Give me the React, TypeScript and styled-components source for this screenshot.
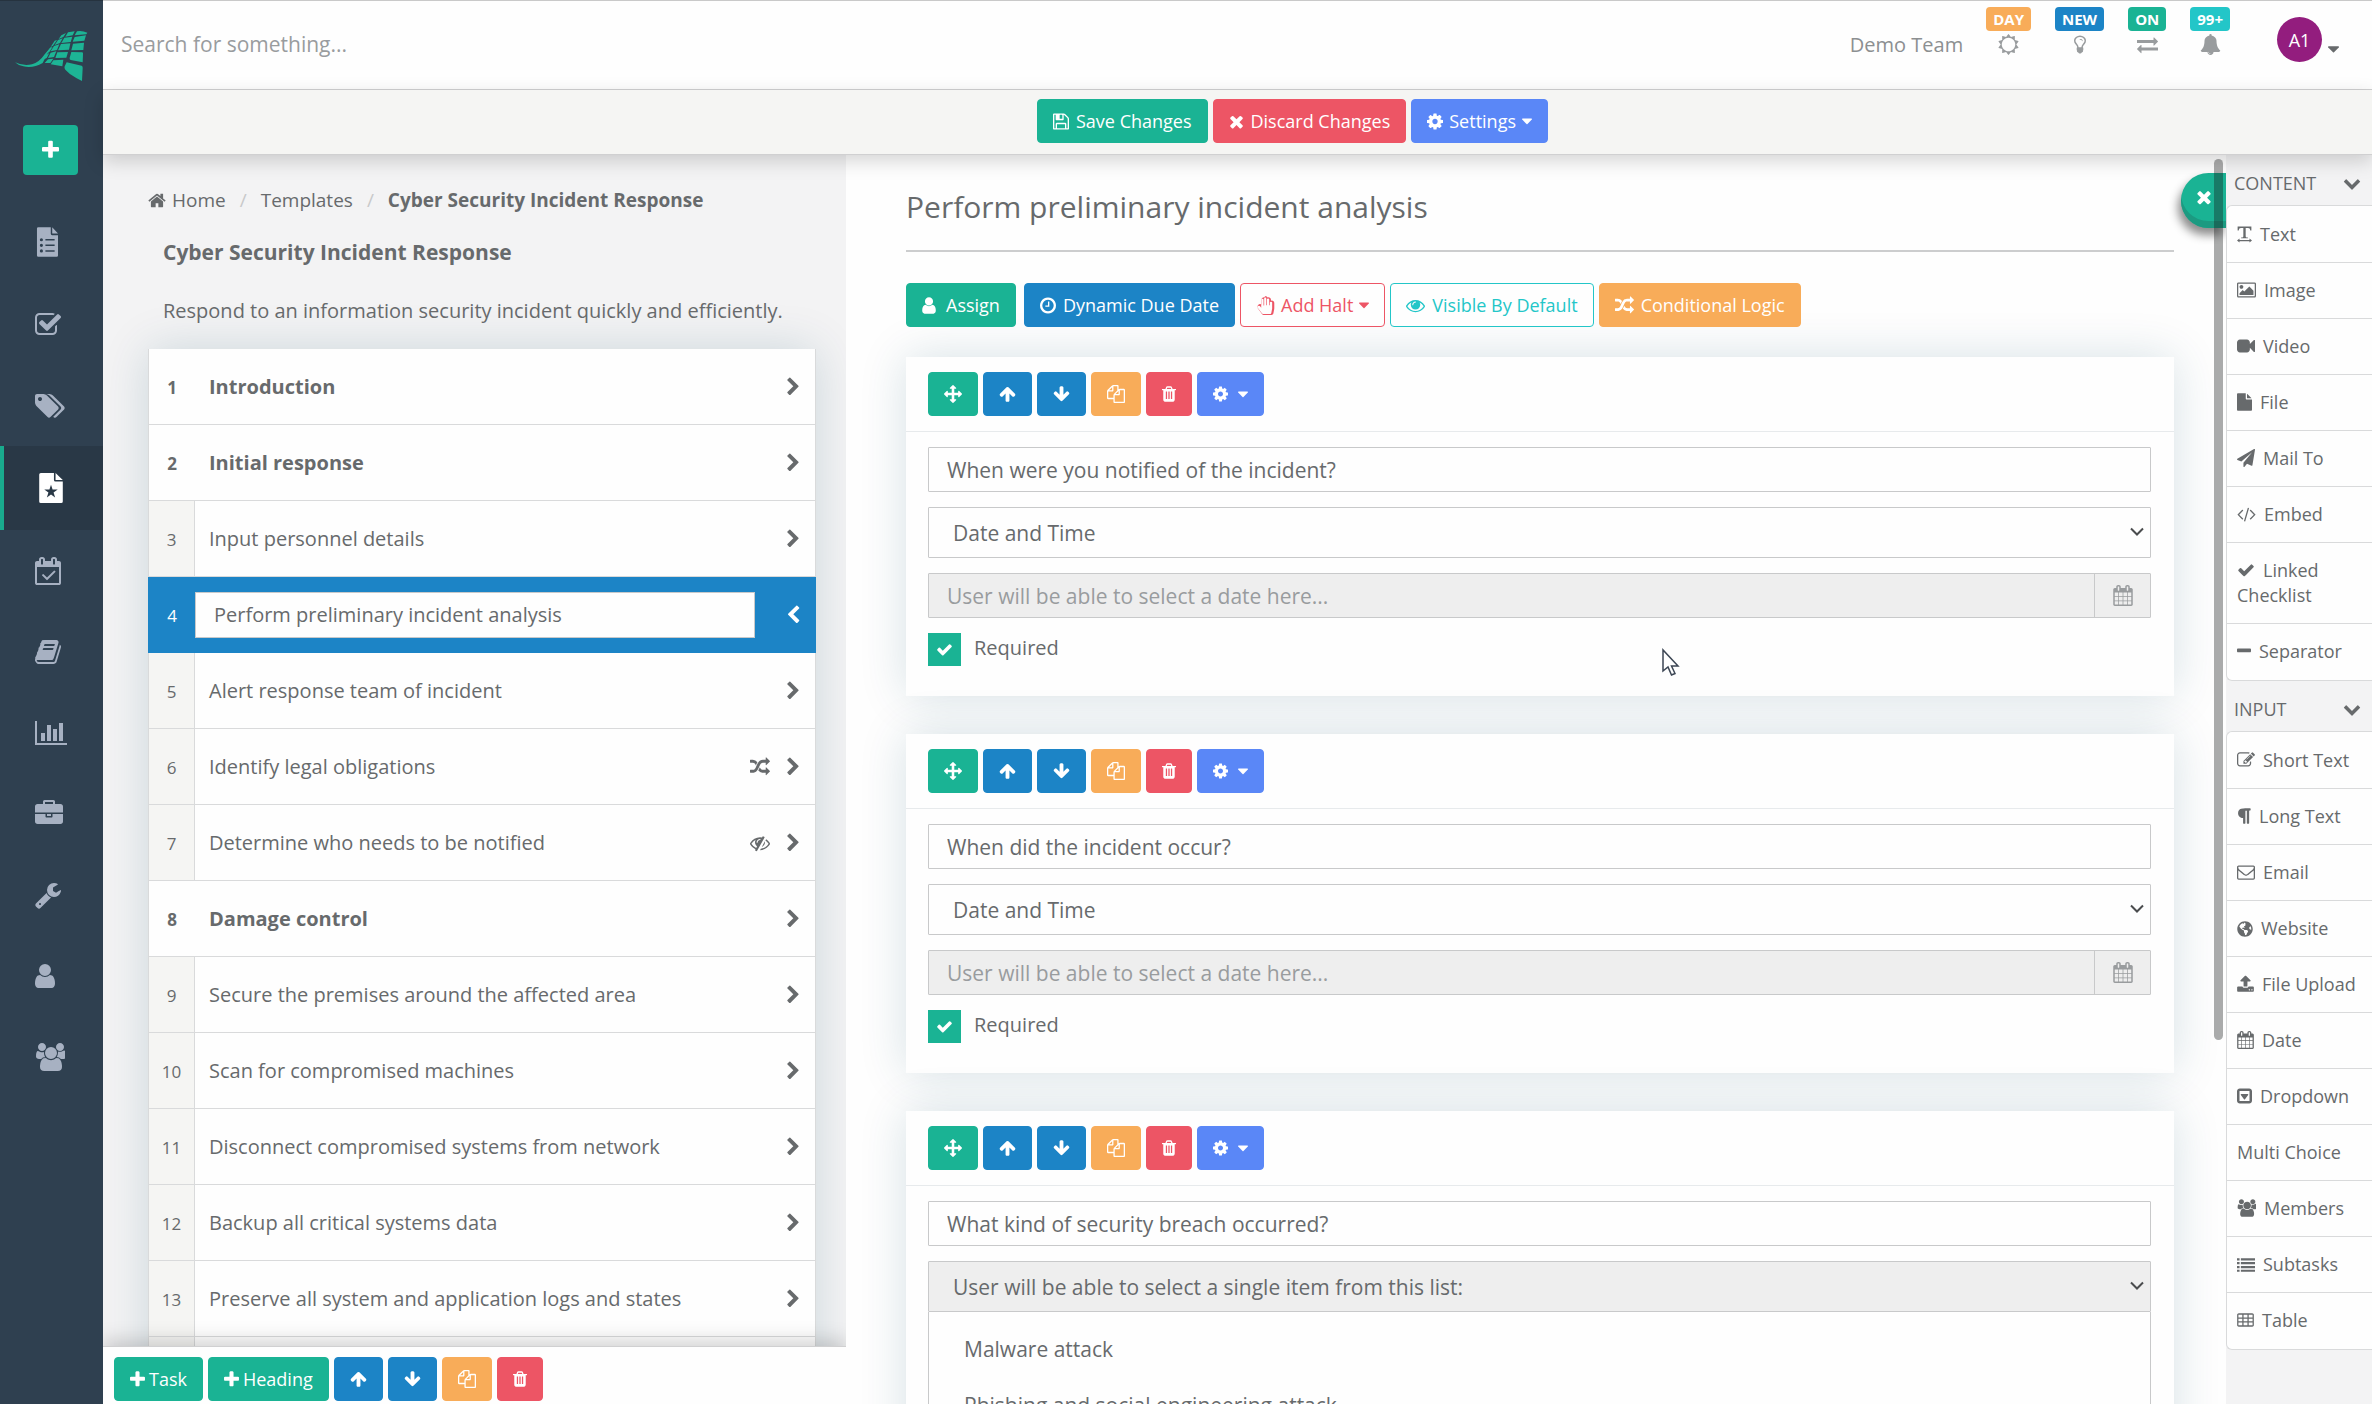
import React from "react";
import styled, { createGlobalStyle, css } from "styled-components";
import { FaGlobeAmericas } from "react-icons/fa";

const color = {
  text: "#676a6c",
  green: "#1ab394",
  blue: "#1c84c6",
  indigo: "#5a87f7",
  orange: "#f8ac59",
  red: "#ed5565",
  teal: "#23c6c8",
  line: "#d9dadb",
  field: "#c8c9ca",
  panel: "#f3f3f4",
  strip: "#f5f5f3",
  nav: "#2f4050",
  navIcon: "#a7b1c2",
};

const GlobalStyle = createGlobalStyle`
  *, *::before, *::after { box-sizing: border-box; }
  body {
    margin: 0;
    overflow: hidden;
    background: #fefefe;
    color: ${color.text};
    font: 20px/28px "Open Sans", "Noto Sans", sans-serif;
  }
  button, input, select { font: inherit; color: inherit; }
  button { cursor: pointer; }
  a { color: inherit; text-decoration: none; }
  ul { list-style: none; margin: 0; padding: 0; }
`;

/* ---------- icons: [left edge, advance width, path] on a 1792 unit em ---------- */

type Glyph = [number, number, string];

const glyphs = {
  plus: [192, 1408, "M1600 736v192q0 40-28 68t-68 28h-416v416q0 40-28 68t-68 28h-192q-40 0-68-28t-28-68v-416h-416q-40 0-68-28t-28-68v-192q0-40 28-68t68-28h416v-416q0-40 28-68t68-28h192q40 0 68 28t28 68v416h416q40 0 68 28t28 68z"],
  minus: [192, 1408, "M1600 736v192q0 40-28 68t-68 28h-1216q-40 0-68-28t-28-68v-192q0-40 28-68t68-28h1216q40 0 68 28t28 68z"],
  times: [192, 1408, "M1490 1322q0 40-28 68l-136 136q-28 28-68 28t-68-28l-294-294-294 294q-28 28-68 28t-68-28l-136-136q-28-28-28-68t28-68l294-294-294-294q-28-28-28-68t28-68l136-136q28-28 68-28t68 28l294 294 294-294q28-28 68-28t68 28l136 136q28 28 28 68t-28 68l-294 294 294 294q28 28 28 68z"],
  cog: [128, 1536, "M1152 896q0-106-75-181t-181-75-181 75-75 181 75 181 181 75 181-75 75-181zm512-109v222q0 12-8 23t-20 13l-185 28q-19 54-39 91 35 50 107 138 10 12 10 25t-9 23q-27 37-99 108t-94 71q-12 0-26-9l-138-108q-44 23-91 38-16 136-29 186-7 28-36 28h-222q-14 0-24.5-8.5t-11.5-21.5l-28-184q-49-16-90-37l-141 107q-10 9-25 9-14 0-25-11-126-114-165-168-7-10-7-23 0-12 8-23 15-21 51-66.500t54-70.500q-27-50-41-99l-183-27q-13-2-21-12.500t-8-23.500v-222q0-12 8-23t19-13l186-28q14-46 39-92-40-57-107-138-10-12-10-24 0-10 9-23 26-36 98.500-107.500t94.500-71.500q13 0 26 10l138 107q44-23 91-38 16-136 29-186 7-28 36-28h222q14 0 24.500 8.500t11.500 21.500l28 184q49 16 90 37l142-107q9-9 24-9 13 0 25 10 129 119 165 170 7 8 7 22 0 12-8 23-15 21-51 66.500t-54 70.500q26 50 41 98l183 28q13 2 21 12.500t8 23.500z"],
  save: [128, 1536, "M512 1536h768v-384h-768v384zm896 0h128v-896q0-14-10-38.500t-20-34.500l-281-281q-10-10-34-20t-39-10v416q0 40-28 68t-68 28h-576q-40 0-68-28t-28-68v-416h-128v1280h128v-416q0-40 28-68t68-28h832q40 0 68 28t28 68v416zm-384-928v-320q0-13-9.500-22.500t-22.500-9.500h-192q-13 0-22.500 9.500t-9.500 22.500v320q0 13 9.500 22.500t22.500 9.500h192q13 0 22.500-9.500t9.500-22.500zm640 32v928q0 40-28 68t-68 28h-1344q-40 0-68-28t-28-68v-1344q0-40 28-68t68-28h928q40 0 88 20t76 48l280 280q28 28 48 76t20 88z"],
  caret: [384, 1024, "M1408 704q0 26-19 45l-448 448q-19 19-45 19t-45-19l-448-448q-19-19-19-45t19-45 45-19h896q26 0 45 19t19 45z"],
  up: [64, 1664, "M1675 971q0 51-37 90l-75 75q-38 38-91 38-54 0-90-38l-294-293v704q0 52-37.500 84.500t-90.500 32.500h-128q-53 0-90.500-32.500t-37.500-84.500v-704l-294 293q-36 38-90 38t-90-38l-75-75q-38-38-38-90 0-53 38-91l651-651q35-37 90-37 54 0 91 37l651 651q37 39 37 91z"],
  down: [64, 1664, "M1675 832q0 53-37 90l-651 652q-39 37-91 37-53 0-90-37l-651-652q-38-36-38-90 0-53 38-91l74-75q39-37 91-37 53 0 90 37l294 294v-704q0-52 38-90t90-38h128q52 0 90 38t38 90v704l294-294q37-37 90-37 52 0 91 37l75 75q37 39 37 91z"],
  move: [0, 1792, "M1792 896q0 26-19 45l-256 256q-19 19-45 19t-45-19-19-45v-128h-384v384h128q26 0 45 19t19 45-19 45l-256 256q-19 19-45 19t-45-19l-256-256q-19-19-19-45t19-45 45-19h128v-384h-384v128q0 26-19 45t-45 19-45-19l-256-256q-19-19-19-45t19-45l256-256q19-19 45-19t45 19 19 45v128h384v-384h-128q-26 0-45-19t-19-45 19-45l256-256q19-19 45-19t45 19l256 256q19 19 19 45t-19 45-45 19h-128v384h384v-128q0-26 19-45t45-19 45 19l256 256q19 19 19 45z"],
  copy: [0, 1792, "M1696 384q40 0 68 28t28 68v1216q0 40-28 68t-68 28h-960q-40 0-68-28t-28-68v-288h-544q-40 0-68-28t-28-68v-672q0-40 20-88t48-76l408-408q28-28 76-48t88-20h416q40 0 68 28t28 68v328q68-40 128-40h416zm-544 213l-299 299h299v-299zm-640-384l-299 299h299v-299zm196 647l316-316v-416h-384v416q0 40-28 68t-68 28h-416v640h512v-256q0-40 20-88t48-76zm956 804v-1152h-384v416q0 40-28 68t-68 28h-416v640h896z"],
  trash: [192, 1408, "M704 1376v-704q0-14-9-23t-23-9h-64q-14 0-23 9t-9 23v704q0 14 9 23t23 9h64q14 0 23-9t9-23zm256 0v-704q0-14-9-23t-23-9h-64q-14 0-23 9t-9 23v704q0 14 9 23t23 9h64q14 0 23-9t9-23zm256 0v-704q0-14-9-23t-23-9h-64q-14 0-23 9t-9 23v704q0 14 9 23t23 9h64q14 0 23-9t9-23zm-544-992h448l-48-117q-7-9-17-11h-317q-10 2-17 11zm928 32v64q0 14-9 23t-23 9h-96v948q0 83-47 143.500t-113 60.500h-832q-66 0-113-58.500t-47-141.500v-952h-96q-14 0-23-9t-9-23v-64q0-14 9-23t23-9h309l70-167q15-37 54-63t79-26h320q40 0 79 26t54 63l70 167h309q14 0 23 9t9 23z"],
  random: [0, 1792, "M666 481q-60 92-137 273-22-45-37-72.500t-40.500-63.500-51-56.500-63-35-81.500-14.500h-224q-14 0-23-9t-9-23v-192q0-14 9-23t23-9h224q250 0 410 225zm1126 799q0 14-9 23l-320 320q-9 9-23 9-13 0-22.500-9.500t-9.500-22.500v-192q-32 0-85 .5t-81 1-73-1-71-5-64-10.500-63-18.500-58-28.500-59-40-55-53.500-56-69.500q59-93 136-273 22 45 37 72.500t40.500 63.500 51 56.500 63 35 81.500 14.500h256v-192q0-14 9-23t23-9q12 0 24 10l319 319q9 9 9 23zm0-896q0 14-9 23l-320 320q-9 9-23 9-13 0-22.500-9.500t-9.500-22.500v-192h-256q-48 0-87 15t-69 45-51 61.500-45 77.500q-32 62-78 171-29 66-49.500 111t-54 105-64 100-74 83-90 68.500-106.500 42-128 16.500h-224q-14 0-23-9t-9-23v-192q0-14 9-23t23-9h224q48 0 87-15t69-45 51-61.500 45-77.500q32-62 78-171 29-66 49.500-111t54-105 64-100 74-83 90-68.500 106.500-42 128-16.500h256v-192q0-14 9-23t23-9q12 0 24 10l319 319q9 9 9 23z"],
  right: [320, 1280, "M1363 877l-742 742q-19 19-45 19t-45-19l-166-166q-19-19-19-45t19-45l531-531-531-531q-19-19-19-45t19-45l166-166q19-19 45-19t45 19l742 742q19 19 19 45t-19 45z"],
  left: [320, 1280, "M1427 301l-531 531 531 531q19 19 19 45t-19 45l-166 166q-19 19-45 19t-45-19l-742-742q-19-19-19-45t19-45l742-742q19-19 45-19t45 19l166 166q19 19 19 45t-19 45z"],
  chevronDown: [0, 1792, "M1683 808l-742 741q-19 19-45 19t-45-19l-742-741q-19-19-19-45.500t19-45.500l166-165q19-19 45-19t45 19l531 531 531-531q19-19 45-19t45 19l166 165q19 19 19 45.500t-19 45.500z"],
  home: [64, 1664, "M1472 992v480q0 26-19 45t-45 19h-384v-384h-256v384h-384q-26 0-45-19t-19-45v-480q0-1 .5-3t.5-3l575-474 575 474q1 2 1 6zm223-69l-62 74q-8 9-21 11h-3q-13 0-21-7l-692-577-692 577q-12 8-24 7-13-2-21-11l-62-74q-8-10-7-23.500t11-21.500l719-599q32-26 76-26t76 26l244 204v-195q0-14 9-23t23-9h192q14 0 23 9t9 23v408l219 182q10 8 11 21.500t-7 23.500z"],
  checkSquare: [64, 1664, "M1472 930v318q0 119-84.500 203.500t-203.500 84.500h-832q-119 0-203.500-84.500t-84.500-203.500v-832q0-119 84.500-203.500t203.500-84.500h832q63 0 117 25 15 7 18 23 3 17-9 29l-49 49q-10 10-23 10-3 0-9-2-23-6-45-6h-832q-66 0-113 47t-47 113v832q0 66 47 113t113 47h832q66 0 113-47t47-113v-254q0-13 9-22l64-64q10-10 23-10 6 0 12 3 20 8 20 29zm231-489l-814 814q-24 24-57 24t-57-24l-430-430q-24-24-24-57t24-57l110-110q24-24 57-24t57 24l263 263 647-647q24-24 57-24t57 24l110 110q24 24 24 57t-24 57z"],
  tags: [0, 1920, "M448 448q0-53-37.500-90.500t-90.500-37.500-90.500 37.500-37.500 90.500 37.500 90.500 90.500 37.500 90.500-37.500 37.500-90.500zm1067 576q0 53-37 90l-491 492q-39 37-91 37-53 0-90-37l-715-716q-38-37-64.500-101t-26.500-117v-416q0-52 38-90t90-38h416q53 0 117 26.500t102 64.500l715 714q37 39 37 91zm384 0q0 53-37 90l-491 492q-39 37-91 37-36 0-59-14t-53-45l470-470q37-37 37-90 0-52-37-91l-715-714q-38-38-102-64.500t-117-26.500h224q53 0 117 26.500t102 64.500l715 714q37 39 37 91z"],
  calendarCheck: [0, 1664, "M1303 964l-512 512q-10 9-23 9t-23-9l-288-288q-9-10-9-23t9-22l46-46q9-9 22-9t23 9l220 220 444-444q10-9 23-9t22 9l46 46q9 9 9 22t-9 23zm-1175 700h1408v-1024h-1408v1024zm384-1216v-288q0-14-9-23t-23-9h-64q-14 0-23 9t-9 23v288q0 14 9 23t23 9h64q14 0 23-9t9-23zm768 0v-288q0-14-9-23t-23-9h-64q-14 0-23 9t-9 23v288q0 14 9 23t23 9h64q14 0 23-9t9-23zm384-64v1280q0 52-38 90t-90 38h-1408q-52 0-90-38t-38-90v-1280q0-52 38-90t90-38h128v-96q0-66 47-113t113-47h64q66 0 113 47t47 113v96h384v-96q0-66 47-113t113-47h64q66 0 113 47t47 113v96h128q52 0 90 38t38 90z"],
  calendar: [64, 1664, "M192 1664h288v-288h-288v288zm352 0h320v-288h-320v288zm-352-352h288v-320h-288v320zm352 0h320v-320h-320v320zm-352-384h288v-288h-288v288zm736 736h320v-288h-320v288zm-384-736h320v-288h-320v288zm768 736h288v-288h-288v288zm-384-352h320v-320h-320v320zm-352-864v-288q0-13-9.500-22.500t-22.500-9.500h-64q-13 0-22.500 9.500t-9.500 22.500v288q0 13 9.500 22.500t22.500 9.500h64q13 0 22.500-9.500t9.500-22.500zm736 864h288v-320h-288v320zm-384-384h320v-288h-320v288zm384 0h288v-288h-288v288zm32-480v-288q0-13-9.500-22.500t-22.500-9.500h-64q-13 0-22.500 9.500t-9.500 22.500v288q0 13 9.500 22.500t22.500 9.500h64q13 0 22.500-9.500t9.500-22.500zm384-64v1280q0 52-38 90t-90 38h-1408q-52 0-90-38t-38-90v-1280q0-52 38-90t90-38h128v-96q0-66 47-113t113-47h64q66 0 113 47t47 113v96h384v-96q0-66 47-113t113-47h64q66 0 113 47t47 113v96h128q52 0 90 38t38 90z"],
  book: [64, 1664, "M1703 478q40 57 18 129l-275 906q-19 64-76.500 107.500t-122.500 43.500h-923q-77 0-148.500-53.500t-99.500-131.500q-24-67-2-127 0-4 3-27t4-37q1-8-3-21.500t-3-19.500q2-11 8-21t16.500-23.500 16.500-23.500q23-38 45-91.500t30-91.500q3-10 .5-30t-.5-28q3-11 17-28t17-23q21-36 42-92t25-90q1-9-2.500-32t.5-28q4-13 22-30.500t22-22.500q19-26 42.500-84.500t27.500-96.500q1-8-3-25.500t-2-26.500q2-8 9-18t18-23 17-21q8-12 16.500-30.500t15-35 16-36 19.500-32 26.500-23.500 36-11.500 47.500 5.500l-1 3q38-9 51-9h761q74 0 114 56t18 130l-274 906q-36 119-71.500 153.500t-128.500 34.500h-869q-27 0-38 15-11 16-1 43 24 70 144 70h923q29 0 56-15.500t35-41.500l300-987q7-22 5-57 38 15 59 43zm-1064 2q-4 13 2 22.500t20 9.500h608q13 0 25.500-9.500t16.500-22.500l21-64q4-13-2-22.500t-20-9.500h-608q-13 0-25.500 9.500t-16.500 22.500zm-83 256q-4 13 2 22.500t20 9.500h608q13 0 25.500-9.500t16.500-22.500l21-64q4-13-2-22.500t-20-9.500h-608q-13 0-25.500 9.500t-16.500 22.500z"],
  chart: [0, 2048, "M640 896v512h-256v-512h256zm384-512v1024h-256v-1024h256zm1024 1152v128h-2048v-1536h128v1408h1920zm-640-896v768h-256v-768h256zm384-384v1152h-256v-1152h256z"],
  briefcase: [0, 1792, "M640 256h512v-128h-512v128zm1152 640v480q0 66-47 113t-113 47h-1472q-66 0-113-47t-47-113v-480h672v160q0 26 19 45t45 19h320q26 0 45-19t19-45v-160h672zm-768 0v128h-256v-128h256zm768-480v384h-1792v-384q0-66 47-113t113-47h352v-160q0-40 28-68t68-28h576q40 0 68 28t28 68v160h352q66 0 113 47t47 113z"],
  wrench: [64, 1664, "M448 1472q0-26-19-45t-45-19-45 19-19 45 19 45 45 19 45-19 19-45zm644-420l-682 682q-37 37-90 37-52 0-91-37l-106-108q-38-36-38-90 0-53 38-91l681-681q39 98 114.500 173.500t173.500 114.500zm634-435q0 39-23 106-47 134-164.500 217.500t-258.500 83.500q-185 0-316.500-131.500t-131.500-316.500 131.500-316.500 316.500-131.500q58 0 121.500 16.500t107.500 46.500q16 11 16 28t-16 28l-293 169v224l193 107q5-3 79-48.500t135.500-81 70.500-35.500q15 0 23.500 10t8.500 25z"],
  user: [256, 1280, "M1536 1399q0 109-62.500 187t-150.500 78h-854q-88 0-150.500-78t-62.500-187q0-85 8.500-160.500t31.500-152 58.500-131 94-89 134.500-34.500q131 128 313 128t313-128q76 0 134.500 34.500t94 89 58.500 131 31.500 152 8.500 160.500zm-256-887q0 159-112.500 271.500t-271.500 112.500-271.500-112.500-112.500-271.500 112.500-271.500 271.500-112.500 271.500 112.500 112.500 271.500z"],
  users: [-64, 1920, "M593 896q-162 5-265 128h-134q-82 0-138-40.500t-56-118.500q0-353 124-353 6 0 43.500 21t97.500 42.500 119 21.500q67 0 133-23-5 37-5 66 0 159 81 292zm1071 637q0 120-73 189.500t-194 69.500h-874q-121 0-194-69.500t-73-189.500q0-53 3.500-103.500t14-109 26.500-108.500 43-97.500 62-81 85.500-53.500 111.500-20q10 0 43 21.500t73 48 107 48 135 21.500 135-21.500 107-48 73-48 43-21.500q61 0 111.500 20t85.500 53.500 62 81 43 97.500 26.500 108.500 14 109 3.500 103.500zm-1024-1277q0 106-75 181t-181 75-181-75-75-181 75-181 181-75 181 75 75 181zm704 384q0 159-112.500 271.500t-271.500 112.500-271.500-112.500-112.500-271.500 112.500-271.500 271.500-112.500 271.500 112.500 112.500 271.500zm576 225q0 78-56 118.500t-138 40.500h-134q-103-123-265-128 81-133 81-292 0-29-5-66 66 23 133 23 59 0 119-21.500t97.500-42.500 43.500-21q124 0 124 353zm-128-609q0 106-75 181t-181 75-181-75-75-181 75-181 181-75 181 75 75 181z"],
  bulb: [384, 1024, "M1120 576q0 13-9.500 22.500t-22.500 9.500-22.500-9.500-9.500-22.500q0-46-54-71t-106-25q-13 0-22.500-9.500t-9.500-22.500 9.500-22.500 22.500-9.500q50 0 99.500 16t87 54 37.500 90zm160 0q0-72-34.500-134t-90-101.500-123-62-136.500-22.500-136.500 22.500-123 62-90 101.500-34.500 134q0 101 68 180 10 11 30.500 33t30.500 33q128 153 141 298h228q13-145 141-298 10-11 30.500-33t30.500-33q68-79 68-180zm128 0q0 155-103 268-45 49-74.500 87t-59.500 95.500-34 107.500q47 28 47 82 0 37-25 64 25 27 25 64 0 52-45 81 13 23 13 47 0 46-31.500 71t-77.500 25q-20 44-60 70t-87 26-87-26-60-70q-46 0-77.500-25t-31.500-71q0-24 13-47-45-29-45-81 0-37 25-64-25-27-25-64 0-54 47-82-4-50-34-107.500t-59.500-95.500-74.500-87q-103-113-103-268 0-99 44.500-184.500t117-142 164-89 186.500-32.500 186.500 32.500 164 89 117 142 44.500 184.500z"],
  exchange: [0, 1792, "M1792 1184v192q0 13-9.500 22.500t-22.500 9.500h-1376v192q0 13-9.500 22.500t-22.500 9.500q-12 0-24-10l-319-320q-9-9-9-22 0-14 9-23l320-320q9-9 23-9 13 0 22.500 9.500t9.500 22.500v192h1376q13 0 22.500 9.500t9.500 22.500zm0-544q0 14-9 23l-320 320q-9 9-23 9-13 0-22.500-9.500t-9.500-22.500v-192h-1376q-13 0-22.500-9.500t-9.500-22.500v-192q0-13 9.500-22.500t22.500-9.500h1376v-192q0-14 9-23t23-9q12 0 24 10l319 319q9 9 9 23z"],
  bell: [0, 1792, "M912 1696q0-16-16-16-59 0-101.500-42.500t-42.500-101.500q0-16-16-16t-16 16q0 73 51.500 124.500t124.500 51.500q16 0 16-16zm816-288q0 52-38 90t-90 38h-448q0 106-75 181t-181 75-181-75-75-181h-448q-52 0-90-38t-38-90q50-42 91-88t85-119.500 74.500-158.500 50-206 19.500-260q0-152 117-282.500t307-158.500q-8-19-8-39 0-40 28-68t68-28 68 28 28 68q0 20-8 39 190 28 307 158.500t117 282.500q0 139 19.500 260t50 206 74.500 158.500 85 119.500 91 88z"],
  sun: [0, 1792, "M1472 896q0-117-45.500-223.500t-123-184-184-123-223.500-45.500-223.500 45.500-184 123-123 184-45.500 223.500 45.500 223.500 123 184 184 123 223.500 45.500 223.500-45.500 184-123 123-184 45.500-223.500zm276 277q-4 15-20 20l-292 96v306q0 16-13 26-15 10-29 4l-292-94-180 248q-10 13-26 13t-26-13l-180-248-292 94q-14 6-29-4-13-10-13-26v-306l-292-96q-16-5-20-20-5-17 4-29l180-248-180-248q-9-13-4-29 4-15 20-20l292-96v-306q0-16 13-26 15-10 29-4l292 94 180-248q9-12 26-12t26 12l180 248 292-94q14-6 29 4 13 10 13 26v306l292 96q16 5 20 20 5 16-4 29l-180 248 180 248q9 12 4 29z"],
  clock: [128, 1536, "M1024 544v448q0 14-9 23t-23 9h-320q-14 0-23-9t-9-23v-64q0-14 9-23t23-9h224v-352q0-14 9-23t23-9h64q14 0 23 9t9 23zm416 352q0-148-73-273t-198-198-273-73-273 73-198 198-73 273 73 273 198 198 273 73 273-73 198-198 73-273zm224 0q0 209-103 385.500t-279.500 279.500-385.500 103-385.500-103-279.500-279.500-103-385.500 103-385.500 279.500-279.500 385.500-103 385.500 103 279.500 279.500 103 385.500z"],
  eye: [0, 1792, "M1664 960q-152-236-381-353 61 104 61 225 0 185-131.500 316.500t-316.500 131.500-316.500-131.500-131.500-316.500q0-121 61-225-229 117-381 353 133 205 333.500 326.500t434.500 121.500 434.500-121.500 333.500-326.500zm-720-384q0-20-14-34t-34-14q-125 0-214.500 89.500t-89.500 214.500q0 20 14 34t34 14 34-14 14-34q0-86 61-147t147-61q20 0 34-14t14-34zm848 384q0 34-20 69-140 230-376.500 368.500t-499.500 138.500-499.500-139-376.500-368q-20-35-20-69t20-69q140-229 376.500-368t499.500-139 499.500 139 376.500 368q20 35 20 69z"],
  eyeSlash: [0, 1792, "M555 1335l78-141q-87-63-136-159t-49-203q0-121 61-225-229 117-381 353 167 258 427 375zm389-759q0-20-14-34t-34-14q-125 0-214.500 89.500t-89.500 214.500q0 20 14 34t34 14 34-14 14-34q0-86 61-147t147-61q20 0 34-14t14-34zm363-191q0 7-1 9-106 189-316 567t-315 566l-49 89q-10 16-28 16-12 0-134-70-16-10-16-28 0-12 44-87-143-65-263.500-173t-208.500-245q-20-31-20-69t20-69q153-235 380-371t496-136q89 0 180 17l54-97q10-16 28-16 5 0 18 6t31 15.500 33 18.500 31.500 18.500 19.500 11.500q16 10 16 27zm37 447q0 139-79 253.500t-209 164.500l280-502q8 45 8 84zm448 128q0 35-20 69-39 64-109 145-150 172-347.500 267t-419.500 95l74-132q212-18 392.500-137t301.500-307q-115-179-282-294l63-112q95 64 182.500 153t144.500 184q20 34 20 69z"],
  check: [0, 1792, "M1671 566q0 40-28 68l-724 724-136 136q-28 28-68 28t-68-28l-136-136-362-362q-28-28-28-68t28-68l136-136q28-28 68-28t68 28l294 295 656-657q28-28 68-28t68 28l136 136q28 28 28 68z"],
  hand: [0, 1792, "M880 128q-46 0-77 31t-31 77v660h-64v-532q0-46-31-77t-77-31-77 31-31 77v745l-107-143q-39-53-106-53-55 0-93 39t-38 93q0 44 26 79l384 512q38 51 102 51h688q34 0 61-22t34-56l76-405q5-32 5-59v-498q0-46-31-77t-77-31-77 31-31 77v233h-64v-532q0-46-31-77t-77-31-77 31-31 77v532h-64v-660q0-46-31-77t-77-31zm0-128q70 0 128 40t86 105q38-16 80-16 98 0 167 69t69 167v78q36-14 78-14 98 0 167 69t69 167v480q0 50-8 98l-74 391q-14 68-66 113t-121 45h-688q-61 0-115-27t-90-76l-384-512q-52-69-52-155 0-106 76-183t182-77q72 0 132 34v-437q0-98 69-167t167-69q20 0 42 4 15-56 78-101t136-26z"],
  textWidth: [128, 1536, "M192 128h1408v400h-110q-20-160-110-225-40-30-150-30h-214v860q0 70 40 90t190 26v70h-700v-70q150-6 190-26t40-90v-860h-214q-110 0-150 30-90 65-110 225h-110zM128 1568l256-200v136h1024v-136l256 200-256 200v-136h-1024v136z"],
  image: [-64, 1920, "M576 576q0 80-56 136t-136 56-136-56-56-136 56-136 136-56 136 56 56 136zm1024 384v448h-1408v-192l320-320 160 160 512-512zm96-704h-1600q-13 0-22.500 9.500t-9.500 22.500v1216q0 13 9.500 22.500t22.500 9.500h1600q13 0 22.500-9.500t9.500-22.500v-1216q0-13-9.500-22.500t-22.500-9.500zm160 32v1216q0 66-47 113t-113 47h-1600q-66 0-113-47t-47-113v-1216q0-66 47-113t113-47h1600q66 0 113 47t47 113z"],
  video: [0, 1792, "M1792 352v1088q0 42-39 59-13 5-25 5-27 0-45-19l-403-403v166q0 119-84.500 203.500t-203.500 84.500h-704q-119 0-203.500-84.500t-84.500-203.500v-704q0-119 84.500-203.500t203.500-84.500h704q119 0 203.500 84.500t84.500 203.500v165l403-402q18-19 45-19 12 0 25 5 39 17 39 59z"],
  file: [128, 1536, "M1152 512v-472q22 14 36 28l408 408q14 14 28 36h-472zm-128 32q0 40 28 68t68 28h544v1056q0 40-28 68t-68 28h-1344q-40 0-68-28t-28-68v-1600q0-40 28-68t68-28h800v544z"],
  plane: [0, 1792, "M1764 11q33 24 27 64l-256 1536q-5 29-32 45-14 8-31 8-11 0-24-5l-453-185-242 295q-18 23-49 23-13 0-22-4-19-7-30.500-23.500t-11.500-36.500v-349l864-1059-1069 925-395-162q-37-14-40-55-2-40 32-59l1664-960q15-9 32-9 20 0 36 11z"],
  code: [0, 1920, "M617 1399l-50 50q-10 10-23 10t-23-10l-466-466q-10-10-10-23t10-23l466-466q10-10 23-10t23 10l50 50q10 10 10 23t-10 23l-393 393 393 393q10 10 10 23t-10 23zm591-1067l-373 1291q-4 13-15.500 19.500t-23.500 2.500l-62-17q-13-4-19.500-15.500t-2.500-24.500l373-1291q4-13 15.500-19.500t23.500-2.500l62 17q13 4 19.500 15.500t2.500 24.500zm657 651l-466 466q-10 10-23 10t-23-10l-50-50q-10-10-10-23t10-23l393-393-393-393q-10-10-10-23t10-23l50-50q10-10 23-10t23 10l466 466q10 10 10 23t-10 23z"],
  edit: [0, 1792, "M888 1184l116-116-152-152-116 116v56h96v96h56zm440-720q-16-16-33 1l-350 350q-17 17-1 33t33-1l350-350q17-17 1-33zm80 594v190q0 119-84.500 203.500t-203.500 84.500h-832q-119 0-203.500-84.500t-84.500-203.500v-832q0-119 84.500-203.500t203.500-84.500h832q63 0 117 25 15 7 18 23 3 17-9 29l-49 49q-14 14-32 8-23-6-45-6h-832q-66 0-113 47t-47 113v832q0 66 47 113t113 47h832q66 0 113-47t47-113v-126q0-13 9-22l64-64q15-15 35-7t20 29zm-96-738l288 288-672 672h-288v-288zm444 132l-92 92-288-288 92-92q28-28 68-28t68 28l152 152q28 28 28 68t-28 68z"],
  paragraph: [200, 1344, "M1534 189v73q0 29-18.500 61t-42.500 32q-50 0-54 1-26 6-32 31-3 11-3 64v1152q0 25-18 43t-43 18h-108q-25 0-43-18t-18-43v-1218h-143v1218q0 25-17.500 43t-43.500 18h-108q-26 0-43.500-18t-17.500-43v-496q-147-12-245-59-126-58-192-179-64-117-64-259 0-166 88-286 88-118 209-159 111-37 417-37h479q25 0 43 18t18 43z"],
  envelope: [0, 1792, "M1664 1504v-768q-32 36-69 66-268 206-426 338-51 43-83 67t-86.500 48.500-102.500 24.500h-2q-48 0-102.500-24.500t-86.500-48.500-83-67q-158-132-426-338-37-30-69-66v768q0 13 9.500 22.500t22.500 9.500h1472q13 0 22.500-9.500t9.500-22.500zm0-1051v-24.500l-.5-13-3-12.500-5.500-9-9-7.500-14-2.500h-1472q-13 0-22.500 9.500t-9.500 22.500q0 168 147 284 193 152 401 317 6 5 35 29.500t46 37.500 44.500 31.500 50.500 27.500 43 9h2q20 0 43-9t50.500-27.500 44.500-31.500 46-37.500 35-29.500q208-165 401-317 54-43 100.500-115.500t46.500-131.500zm128-37v1088q0 66-47 113t-113 47h-1472q-66 0-113-47t-47-113v-1088q0-66 47-113t113-47h1472q66 0 113 47t47 113z"],
  upload: [64, 1664, "M1344 1472q0-26-19-45t-45-19-45 19-19 45 19 45 45 19 45-19 19-45zm256 0q0-26-19-45t-45-19-45 19-19 45 19 45 45 19 45-19 19-45zm128-224v320q0 40-28 68t-68 28h-1472q-40 0-68-28t-28-68v-320q0-40 28-68t68-28h427q21 56 70.500 92t110.500 36h256q61 0 110.500-36t70.500-92h427q40 0 68 28t28 68zm-325-648q-17 40-59 40h-256v448q0 26-19 45t-45 19h-256q-26 0-45-19t-19-45v-448h-256q-42 0-59-40-17-39 14-69l448-448q18-19 45-19t45 19l448 448q31 30 14 69z"],
  dropdown: [128, 1536, "M1273 723q17 35-6 66l-320 448q-19 27-52 27t-52-27l-320-448q-23-31-6-66 17-35 57-35h640q40 0 59 35zM1408 1376v-960q0-32-32-32h-960q-32 0-32 32v960q0 32 32 32h960q32 0 32-32zM1664 416v960q0 119-84.500 203.500t-203.500 84.500h-960q-119 0-203.500-84.500t-84.500-203.500v-960q0-119 84.500-203.500t203.500-84.500h960q119 0 203.500 84.500t84.500 203.500z"],
  list: [0, 1792, "M0 320h256v224h-256zM384 320h1408v224h-1408zM0 704h256v224h-256zM384 704h1408v224h-1408zM0 1088h256v224h-256zM384 1088h1408v224h-1408zM0 1472h256v192h-256zM384 1472h1408v192h-1408z"],
  table: [64, 1664, "M192 1408h384v-256h-384zM192 1024h384v-256h-384zM192 640h384v-256h-384zM704 1408h384v-256h-384zM704 1024h384v-256h-384zM704 640h384v-256h-384zM1216 1408h384v-256h-384zM1216 1024h384v-256h-384zM1216 640h384v-256h-384zM64 384q0-66 47-113t113-47h1344q66 0 113 47t47 113v1024q0 66-47 113t-113 47h-1344q-66 0-113-47t-47-113z"],
  docList: [136, 1400, "M336 0h760v400q0 80 80 80h360v1232q0 80-80 80h-1120q-80 0-80-80v-1632q0-80 80-80zM1184 0l352 384h-352zM430 760a96 96 0 1 0 192 0a96 96 0 1 0-192 0zM430 1100a96 96 0 1 0 192 0a96 96 0 1 0-192 0zM430 1440a96 96 0 1 0 192 0a96 96 0 1 0-192 0zM770 715h560v90h-560zM770 1055h560v90h-560zM770 1395h560v90h-560z"],
  docStar: [192, 1408, "M288 0h784v416q0 96 96 96h432v1184q0 96-96 96h-1216q-96 0-96-96v-1600q0-96 96-96zM1168 0l432 416h-432zM896 700l94 290h306l-247 180 94 290-247-179-247 179 94-290-247-180h306z"],
} satisfies Record<string, Glyph>;

type GlyphName = keyof typeof glyphs | "globe";

const Svg = styled.svg`
  display: block;
  flex: none;
  fill: currentColor;
`;

function Icon({ name, size = 18 }: { name: GlyphName; size?: number }) {
  if (name === "globe") return <FaGlobeAmericas size={size - 2} aria-hidden="true" />;
  const [x, advance, d] = glyphs[name] as Glyph;
  return (
    <Svg
      viewBox={`${x} 0 ${advance} 1792`}
      width={Math.round((advance / 1792) * size)}
      height={size}
      aria-hidden="true"
    >
      <path d={d} fillRule="evenodd" />
    </Svg>
  );
}

/* ---------- frame ---------- */

const Page = styled.div`
  display: grid;
  grid-template-columns: 103px minmax(0, 1fr);
  height: 100vh;
`;

const Sidebar = styled.nav`
  display: flex;
  flex-direction: column;
  background: ${color.nav};
  border-top: 1px solid #26333f;
`;

const LogoLink = styled.a`
  display: block;
  padding: 24px 0 38px 10px;
`;

const LogoMark = styled.svg`
  display: block;
  fill: #1db495;
`;

const CreateButton = styled.button`
  display: grid;
  place-items: center;
  width: 55px;
  height: 50px;
  margin: 0 0 25px 23px;
  border: 0;
  border-radius: 4px;
  background: ${color.green};
  color: #fff;
`;

const NavLink = styled.a<{ $active?: boolean; $tall?: boolean }>`
  display: flex;
  align-items: center;
  height: ${(p) => (p.$tall ? 84 : 81)}px;
  padding-left: 35px;
  color: ${color.navIcon};
  ${(p) =>
    p.$active &&
    css`
      border-left: 4px solid #19aa8d;
      background: #293846;
      color: #fff;
    `}
`;

const Content = styled.div`
  display: grid;
  grid-template-rows: 90px 65px minmax(0, 1fr);
  min-width: 0;
  height: 100vh;
`;

const TopBar = styled.header`
  display: flex;
  justify-content: space-between;
  border-top: 1px solid #c9c9c9;
  border-bottom: 1px solid #d0d0d1;
  background: #fefefe;
`;

const Search = styled.input`
  flex: 1;
  height: 86px;
  padding: 0 18px;
  border: 0;
  outline: 0;
  background: transparent;
  font-size: 21px;
  &::placeholder {
    color: #999c9e;
    opacity: 1;
  }
`;

const TopTools = styled.div`
  display: flex;
  align-items: flex-start;
  color: #999c9e;
`;

const Team = styled.a`
  margin: 30px 23px 0 0;
  font-size: 20px;
  color: #8c8f91;
`;

const Status = styled.button`
  display: flex;
  flex-direction: column;
  align-items: center;
  gap: 3px;
  margin: 6px 24px 0 0;
  padding: 0;
  border: 0;
  background: none;
  color: #999c9e;
`;

const Badge = styled.span<{ $bg: string }>`
  padding: 0 7px;
  border-radius: 4px;
  background: ${(p) => p.$bg};
  color: #fff;
  font-size: 15px;
  font-weight: 700;
  line-height: 24px;
`;

const Account = styled.button`
  display: flex;
  align-items: center;
  gap: 6px;
  margin: 16px 33px 0 23px;
  padding: 0;
  border: 0;
  background: none;
  color: ${color.text};
`;

const Avatar = styled.span`
  display: grid;
  place-items: center;
  width: 45px;
  height: 45px;
  border-radius: 50%;
  background: #931d7e;
  color: #fff;
  font-size: 18px;
`;

const AccountCaret = styled.span`
  padding-top: 18px;
`;

const ActionBar = styled.div`
  position: relative;
  z-index: 2;
  display: flex;
  justify-content: center;
  align-items: flex-start;
  gap: 5px;
  padding: 9px 0 0 110px;
  border-bottom: 1px solid #d0d0d1;
  background: ${color.strip};
  box-shadow: 0 6px 18px rgba(0, 0, 0, 0.17);
`;

const Button = styled.button<{ $bg: string; $outline?: boolean; $gap?: number }>`
  display: inline-flex;
  align-items: center;
  gap: ${(p) => p.$gap ?? 7}px;
  height: 44px;
  padding: 0 15px;
  border: 1px solid ${(p) => p.$bg};
  border-radius: 4px;
  background: ${(p) => (p.$outline ? "#fefefe" : p.$bg)};
  color: ${(p) => (p.$outline ? p.$bg : "#fff")};
  font-size: 18px;
  white-space: nowrap;
`;

const Columns = styled.div`
  display: grid;
  grid-template-columns: minmax(0, 743fr) minmax(0, 1380fr) 146px;
  min-height: 0;
`;

/* ---------- checklist outline ---------- */

const Outline = styled.section`
  display: grid;
  grid-template-rows: minmax(0, 1fr) 58px;
  min-height: 0;
  overflow: hidden;
  background: ${color.panel};
`;

const OutlineScroll = styled.div`
  overflow: hidden;
  padding: 31px 30px 0 45px;
`;

const Crumbs = styled.ol`
  display: flex;
  align-items: center;
  gap: 14px;
  margin: 0 0 24px;
  padding: 0;
  list-style: none;
  font-size: 19px;

  li {
    display: flex;
    align-items: center;
    gap: 14px;
    white-space: nowrap;
  }
  li + li::before {
    content: "/";
    color: #c8c9ca;
  }
  a {
    display: flex;
    align-items: center;
    gap: 6px;
  }
`;

const OutlineTitle = styled.h2`
  margin: 0 0 31px;
  padding-left: 15px;
  font-size: 21px;
  line-height: 28px;
`;

const OutlineText = styled.p`
  margin: 0 0 24px;
  padding-left: 15px;
  font-size: 20px;
  white-space: nowrap;
`;

const Tasks = styled.ul`
  box-shadow: 0 0 44px rgba(0, 75, 100, 0.16);
  background: #fefefe;
`;

const Task = styled.li<{ $heading?: boolean; $active?: boolean }>`
  display: grid;
  grid-template-columns: 46px minmax(0, 1fr) auto 28px;
  align-items: center;
  height: 76px;
  border: 1px solid ${color.line};
  border-top: 0;
  font-weight: ${(p) => (p.$heading ? 700 : 400)};
  ${(p) =>
    p.$active &&
    css`
      background: ${color.blue};
      border-color: ${color.blue};
      color: #fff;
    `}
`;

const TaskNumber = styled.span<{ $plain?: boolean }>`
  display: grid;
  place-items: center;
  align-self: stretch;
  padding-top: 2px;
  font-size: 17px;
  ${(p) =>
    !p.$plain &&
    css`
      border-right: 1px solid ${color.line};
      background: ${color.strip};
    `}
`;

const TaskLink = styled.a`
  padding-left: 14px;
  font-size: 20px;
  white-space: nowrap;
`;

const TaskInput = styled.input`
  height: 46px;
  margin-right: 15px;
  padding: 0 18px;
  border: 1px solid ${color.field};
  outline: 0;
  background: #fefefe;
  color: ${color.text};
  font-size: 20px;
`;

const TaskFlag = styled.span`
  padding-right: 17px;
`;

const BottomBar = styled.div`
  position: relative;
  z-index: 1;
  display: flex;
  align-items: flex-start;
  gap: 5px;
  padding: 10px 11px 0;
  border-top: 1px solid #d0d0d1;
  background: #fefefe;
  box-shadow: 0 -6px 18px rgba(0, 0, 0, 0.17);
`;

/* ---------- editor ---------- */

const Editor = styled.main`
  position: relative;
  overflow: hidden;
  min-height: 0;
  padding: 0 52px 0 60px;
`;

const EditorTitle = styled.h1`
  margin: 0 0 31px;
  padding: 29px 0 20px;
  border-bottom: 2px solid #cccdce;
  font-size: 30px;
  font-weight: 400;
  line-height: 46px;
`;

const EditorActions = styled.div`
  display: flex;
  gap: 5px;
  margin-bottom: 30px;

  & > :first-child {
    margin-right: 3px;
  }
`;

const Card = styled.article`
  margin-bottom: 38px;
  background: #fefefe;
  box-shadow: 0 0 44px rgba(0, 75, 100, 0.16);
`;

const CardTools = styled.div`
  display: flex;
  gap: 5px;
  padding: 15px 22px;
  border-bottom: 1px solid #e7eaec;
`;

const CardBody = styled.div`
  display: flex;
  flex-direction: column;
  gap: 15px;
  padding: 15px 23px 30px 22px;
`;

const fieldBox = css`
  width: 100%;
  border: 1px solid ${color.field};
  border-radius: 1px;
  background: #fefefe;
  font-size: 21px;
  outline: 0;
`;

const Field = styled.input`
  ${fieldBox}
  height: 45px;
  padding: 0 18px;
`;

const SelectWrap = styled.div`
  position: relative;
`;

const Select = styled.select<{ $muted?: boolean }>`
  ${fieldBox}
  display: block;
  appearance: none;
  height: 51px;
  padding: 0 24px;
  background: ${(p) => (p.$muted ? "#eee" : "#fefefe")};
`;

const SelectArrow = styled.svg`
  position: absolute;
  right: 7px;
  top: 20px;
  fill: none;
  stroke: #4a4c4e;
  stroke-width: 2;
`;

const DateGroup = styled.div`
  display: flex;
  height: 45px;
  border: 1px solid ${color.field};
  border-radius: 1px;
  background: #eee;
  color: #999c9e;
`;

const DateInput = styled.input`
  flex: 1;
  padding: 0 18px;
  border: 0;
  outline: 0;
  background: transparent;
  font-size: 21px;
  &::placeholder {
    color: #999c9e;
    opacity: 1;
  }
`;

const DateButton = styled.button`
  display: grid;
  place-items: center;
  width: 56px;
  padding: 0;
  border: 0;
  border-left: 1px solid ${color.field};
  background: transparent;
  color: #999c9e;
`;

const Required = styled.label`
  position: relative;
  display: flex;
  gap: 13px;
  height: 33px;
  font-size: 20px;
  line-height: 30px;
`;

const Check = styled.input`
  appearance: none;
  width: 33px;
  height: 33px;
  margin: 0;
  background: ${color.green};
`;

const CheckMark = styled.span`
  position: absolute;
  top: 8px;
  left: 8px;
  color: #fff;
  pointer-events: none;
`;

const Options = styled.ul`
  border: 1px solid ${color.field};
  border-top: 0;
  margin-top: -15px;
  padding: 9px 35px;

  li {
    font-size: 21px;
    line-height: 56px;
  }
`;

const ScrollThumb = styled.div`
  position: absolute;
  z-index: 1;
  top: 4px;
  right: 3px;
  width: 9px;
  height: 881px;
  border-radius: 5px;
  background: rgba(22, 26, 26, 0.36);
`;

const ClosePalette = styled.button`
  position: absolute;
  top: 18px;
  right: 0;
  display: grid;
  place-items: center;
  width: 45px;
  height: 55px;
  padding: 0 0 7px;
  border: 0;
  border-radius: 28px 0 0 28px;
  background: ${color.green};
  color: #fff;
  box-shadow: inset 0 -7px 0 #1c9a81, -3px 7px 10px rgba(0, 0, 0, 0.45);
`;

const Pointer = styled.svg`
  position: absolute;
  top: 493px;
  left: 815px;
`;

/* ---------- palette ---------- */

const Palette = styled.aside`
  overflow: hidden;
  min-height: 0;
  background: ${color.panel};
  font-size: 18px;
`;

const PaletteHead = styled.button`
  display: flex;
  align-items: center;
  justify-content: space-between;
  width: 100%;
  height: 50px;
  padding: 5px 11px 0 8px;
  border: 0;
  background: transparent;
`;

const PaletteList = styled.ul`
  padding: 1px 0;
  border: 1px solid ${color.line};
  border-right: 0;
  border-radius: 6px 0 0 6px;
  background: #fefefe;

  li + li {
    border-top: 1px solid ${color.line};
  }
`;

const PaletteItem = styled.a`
  display: block;
  padding: 15px 10px;
  line-height: 25px;

  svg {
    display: inline-block;
    margin-right: 8px;
    vertical-align: -2px;
  }
`;

/* ---------- data ---------- */

const nav: { icon: GlyphName; label: string; tall?: boolean; active?: boolean }[] = [
  { icon: "docList", label: "Checklists", tall: true },
  { icon: "checkSquare", label: "Tasks" },
  { icon: "tags", label: "Tags" },
  { icon: "docStar", label: "Templates", tall: true, active: true },
  { icon: "calendarCheck", label: "Schedule" },
  { icon: "book", label: "Library" },
  { icon: "chart", label: "Reports" },
  { icon: "briefcase", label: "Organization" },
  { icon: "wrench", label: "Settings" },
  { icon: "user", label: "Profile" },
  { icon: "users", label: "Members" },
];

const tasks: { title: string; heading?: boolean; active?: boolean; flag?: GlyphName }[] = [
  { title: "Introduction", heading: true },
  { title: "Initial response", heading: true },
  { title: "Input personnel details" },
  { title: "Perform preliminary incident analysis", active: true },
  { title: "Alert response team of incident" },
  { title: "Identify legal obligations", flag: "random" },
  { title: "Determine who needs to be notified", flag: "eyeSlash" },
  { title: "Damage control", heading: true },
  { title: "Secure the premises around the affected area" },
  { title: "Scan for compromised machines" },
  { title: "Disconnect compromised systems from network" },
  { title: "Backup all critical systems data" },
  { title: "Preserve all system and application logs and states" },
];

const statuses: { text: string; bg: string; icon: GlyphName }[] = [
  { text: "DAY", bg: color.orange, icon: "sun" },
  { text: "NEW", bg: color.blue, icon: "bulb" },
  { text: "ON", bg: color.green, icon: "exchange" },
  { text: "99+", bg: color.teal, icon: "bell" },
];

const palette: { title: string; items: [string, GlyphName?][] }[] = [
  {
    title: "CONTENT",
    items: [
      ["Text", "textWidth"],
      ["Image", "image"],
      ["Video", "video"],
      ["File", "file"],
      ["Mail To", "plane"],
      ["Embed", "code"],
      ["Linked Checklist", "check"],
      ["Separator", "minus"],
    ],
  },
  {
    title: "INPUT",
    items: [
      ["Short Text", "edit"],
      ["Long Text", "paragraph"],
      ["Email", "envelope"],
      ["Website", "globe"],
      ["File Upload", "upload"],
      ["Date", "calendar"],
      ["Dropdown", "dropdown"],
      ["Multi Choice"],
      ["Members", "users"],
      ["Subtasks", "list"],
      ["Table", "table"],
    ],
  },
];

/* ---------- parts ---------- */

const sail = [
  "M170 112L215 122Q219 124 218 130L216 168L200 160Q178 148 166 134Q162 130 164 124Z",
  "M184 81L217 82Q220 83 219 88L218 112L182 105Q178 104 179 98Z",
  "M189 56L222 53L220 75L184 76Z",
  "M194 36L228 31L223 47L188 50Z",
  "M201 19Q216 16 232 23L229 28L194 31Z",
  "M174 22L194 19L188 31L166 35Z",
  "M163 38L187 35L182 51L154 54Z",
  "M153 57L181 55L177 74L144 76Z",
  "M142 82L174 81L169 98L136 99Z",
  "M130 106L160 104L157 124L122 118Z",
  "M154 31L168 24L160 36L146 42Z",
  "M144 45L158 40L150 54L134 60Z",
  "M132 63L148 58L141 75L122 79Z",
  "M122 83L139 79L132 96L114 99Z",
  "M114 103L130 101L121 114L104 114Z",
  "M134 47L141 45L130 61L122 66Z",
  "M120 69L128 65L118 81L108 86Z",
  "M108 90L118 84L110 99L100 104Z",
  "M15 112Q40 124 66 118Q88 112 104 88L126 62L108 94L98 114Q70 130 40 124Q24 121 15 112Z",
];

function Logo() {
  return (
    <LogoMark width="84" height="62" viewBox="0 0 252 186" role="img" aria-label="Company logo">
      {sail.map((d) => (
        <path key={d} d={d} />
      ))}
    </LogoMark>
  );
}

function BlockTools() {
  return (
    <CardTools>
      <Button $bg={color.green} aria-label="Move"><Icon name="move" /></Button>
      <Button $bg={color.blue} aria-label="Move up"><Icon name="up" /></Button>
      <Button $bg={color.blue} aria-label="Move down"><Icon name="down" /></Button>
      <Button $bg={color.orange} aria-label="Duplicate"><Icon name="copy" /></Button>
      <Button $bg={color.red} aria-label="Delete"><Icon name="trash" /></Button>
      <Button $bg={color.indigo} $gap={10} aria-label="Options">
        <Icon name="cog" />
        <Icon name="caret" />
      </Button>
    </CardTools>
  );
}

function DropDown({ label, value, muted }: { label: string; value: string; muted?: boolean }) {
  return (
    <SelectWrap>
      <Select aria-label={label} $muted={muted} defaultValue={value}>
        <option>{value}</option>
      </Select>
      <SelectArrow width="14" height="10" viewBox="0 0 14 10" aria-hidden="true">
        <path d="M1 1.500L7 7.500L13 1.500" />
      </SelectArrow>
    </SelectWrap>
  );
}

function DateBlock({ question }: { question: string }) {
  return (
    <Card>
      <BlockTools />
      <CardBody>
        <Field aria-label="Question" defaultValue={question} />
        <DropDown label="Date format" value="Date and Time" />
        <DateGroup>
          <DateInput aria-label="Date" readOnly placeholder="User will be able to select a date here..." />
          <DateButton aria-label="Open calendar"><Icon name="calendar" size={21} /></DateButton>
        </DateGroup>
        <Required>
          <Check type="checkbox" defaultChecked />
          <CheckMark><Icon name="check" size={17} /></CheckMark>
          Required
        </Required>
      </CardBody>
    </Card>
  );
}

export default function App() {
  return (
    <>
      <GlobalStyle />
      <Page>
        <Sidebar aria-label="Main">
          <LogoLink href="#" aria-label="Dashboard"><Logo /></LogoLink>
          <CreateButton aria-label="Create"><Icon name="plus" size={22} /></CreateButton>
          {nav.map((n) => (
            <NavLink key={n.label} href="#" aria-label={n.label} $active={n.active} $tall={n.tall}>
              <Icon name={n.icon} size={n.tall ? 30 : 28} />
            </NavLink>
          ))}
        </Sidebar>

        <Content>
          <TopBar>
            <Search aria-label="Search" placeholder="Search for something..." />
            <TopTools>
              <Team href="#">Demo Team</Team>
              {statuses.map((s) => (
                <Status key={s.text}>
                  <Badge $bg={s.bg}>{s.text}</Badge>
                  <Icon name={s.icon} size={21} />
                </Status>
              ))}
              <Account aria-label="Account">
                <Avatar>A1</Avatar>
                <AccountCaret><Icon name="caret" size={20} /></AccountCaret>
              </Account>
            </TopTools>
          </TopBar>

          <ActionBar>
            <Button $bg={color.green}><Icon name="save" size={19} />Save Changes</Button>
            <Button $bg={color.red}><Icon name="times" size={19} />Discard Changes</Button>
            <Button $bg={color.indigo} $gap={6}><Icon name="cog" size={19} />Settings<Icon name="caret" /></Button>
          </ActionBar>

          <Columns>
            <Outline>
              <OutlineScroll>
                <Crumbs>
                  <li><a href="#"><Icon name="home" size={19} />Home</a></li>
                  <li><a href="#">Templates</a></li>
                  <li><strong>Cyber Security Incident Response</strong></li>
                </Crumbs>
                <OutlineTitle>Cyber Security Incident Response</OutlineTitle>
                <OutlineText>Respond to an information security incident quickly and efficiently.</OutlineText>
                <Tasks>
                  {tasks.map((t, i) => (
                    <Task key={t.title} $heading={t.heading} $active={t.active}>
                      <TaskNumber $plain={t.heading || t.active}>{i + 1}</TaskNumber>
                      {t.active ? (
                        <TaskInput aria-label="Task name" defaultValue={t.title} />
                      ) : (
                        <TaskLink href="#">{t.title}</TaskLink>
                      )}
                      <TaskFlag>{t.flag && <Icon name={t.flag} size={20} />}</TaskFlag>
                      <Icon name={t.active ? "left" : "right"} size={20} />
                    </Task>
                  ))}
                  <Task aria-hidden="true">
                    <TaskNumber />
                  </Task>
                </Tasks>
              </OutlineScroll>
              <BottomBar>
                <Button $bg={color.green} $gap={4}><Icon name="plus" size={19} />Task</Button>
                <Button $bg={color.green} $gap={4}><Icon name="plus" size={19} />Heading</Button>
                <Button $bg={color.blue} aria-label="Move task up"><Icon name="up" /></Button>
                <Button $bg={color.blue} aria-label="Move task down"><Icon name="down" /></Button>
                <Button $bg={color.orange} aria-label="Duplicate task"><Icon name="copy" /></Button>
                <Button $bg={color.red} aria-label="Delete task"><Icon name="trash" /></Button>
              </BottomBar>
            </Outline>

            <Editor>
              <EditorTitle>Perform preliminary incident analysis</EditorTitle>
              <EditorActions>
                <Button $bg={color.green} $gap={10}><Icon name="user" size={19} />Assign</Button>
                <Button $bg={color.blue}><Icon name="clock" size={19} />Dynamic Due Date</Button>
                <Button $bg={color.red} $outline $gap={6}><Icon name="hand" size={19} />Add Halt<Icon name="caret" /></Button>
                <Button $bg={color.teal} $outline><Icon name="eye" size={19} />Visible By Default</Button>
                <Button $bg={color.orange}><Icon name="random" size={19} />Conditional Logic</Button>
              </EditorActions>
              <DateBlock question="When were you notified of the incident?" />
              <DateBlock question="When did the incident occur?" />
              <Card>
                <BlockTools />
                <CardBody>
                  <Field aria-label="Question" defaultValue="What kind of security breach occurred?" />
                  <DropDown label="Options" value="User will be able to select a single item from this list:" muted />
                  <Options>
                    <li>Malware attack</li>
                    <li>Phishing and social engineering attack</li>
                  </Options>
                </CardBody>
              </Card>
              <ClosePalette aria-label="Close panel"><Icon name="times" size={20} /></ClosePalette>
              <ScrollThumb />
              <Pointer width="20" height="30" viewBox="0 0 20 30" aria-hidden="true">
                <path d="M2 2V23L7 19L10.500 27L14 25.500L10.500 18H17Z" fill="#fff" stroke="#3c4654" strokeWidth="1.500" />
              </Pointer>
            </Editor>

            <Palette>
              {palette.map((group) => (
                <React.Fragment key={group.title}>
                  <PaletteHead>{group.title}<Icon name="chevronDown" size={18} /></PaletteHead>
                  <PaletteList>
                    {group.items.map(([label, icon]) => (
                      <li key={label}>
                        <PaletteItem href="#">{icon && <Icon name={icon} />}{label}</PaletteItem>
                      </li>
                    ))}
                  </PaletteList>
                </React.Fragment>
              ))}
            </Palette>
          </Columns>
        </Content>
      </Page>
    </>
  );
}
